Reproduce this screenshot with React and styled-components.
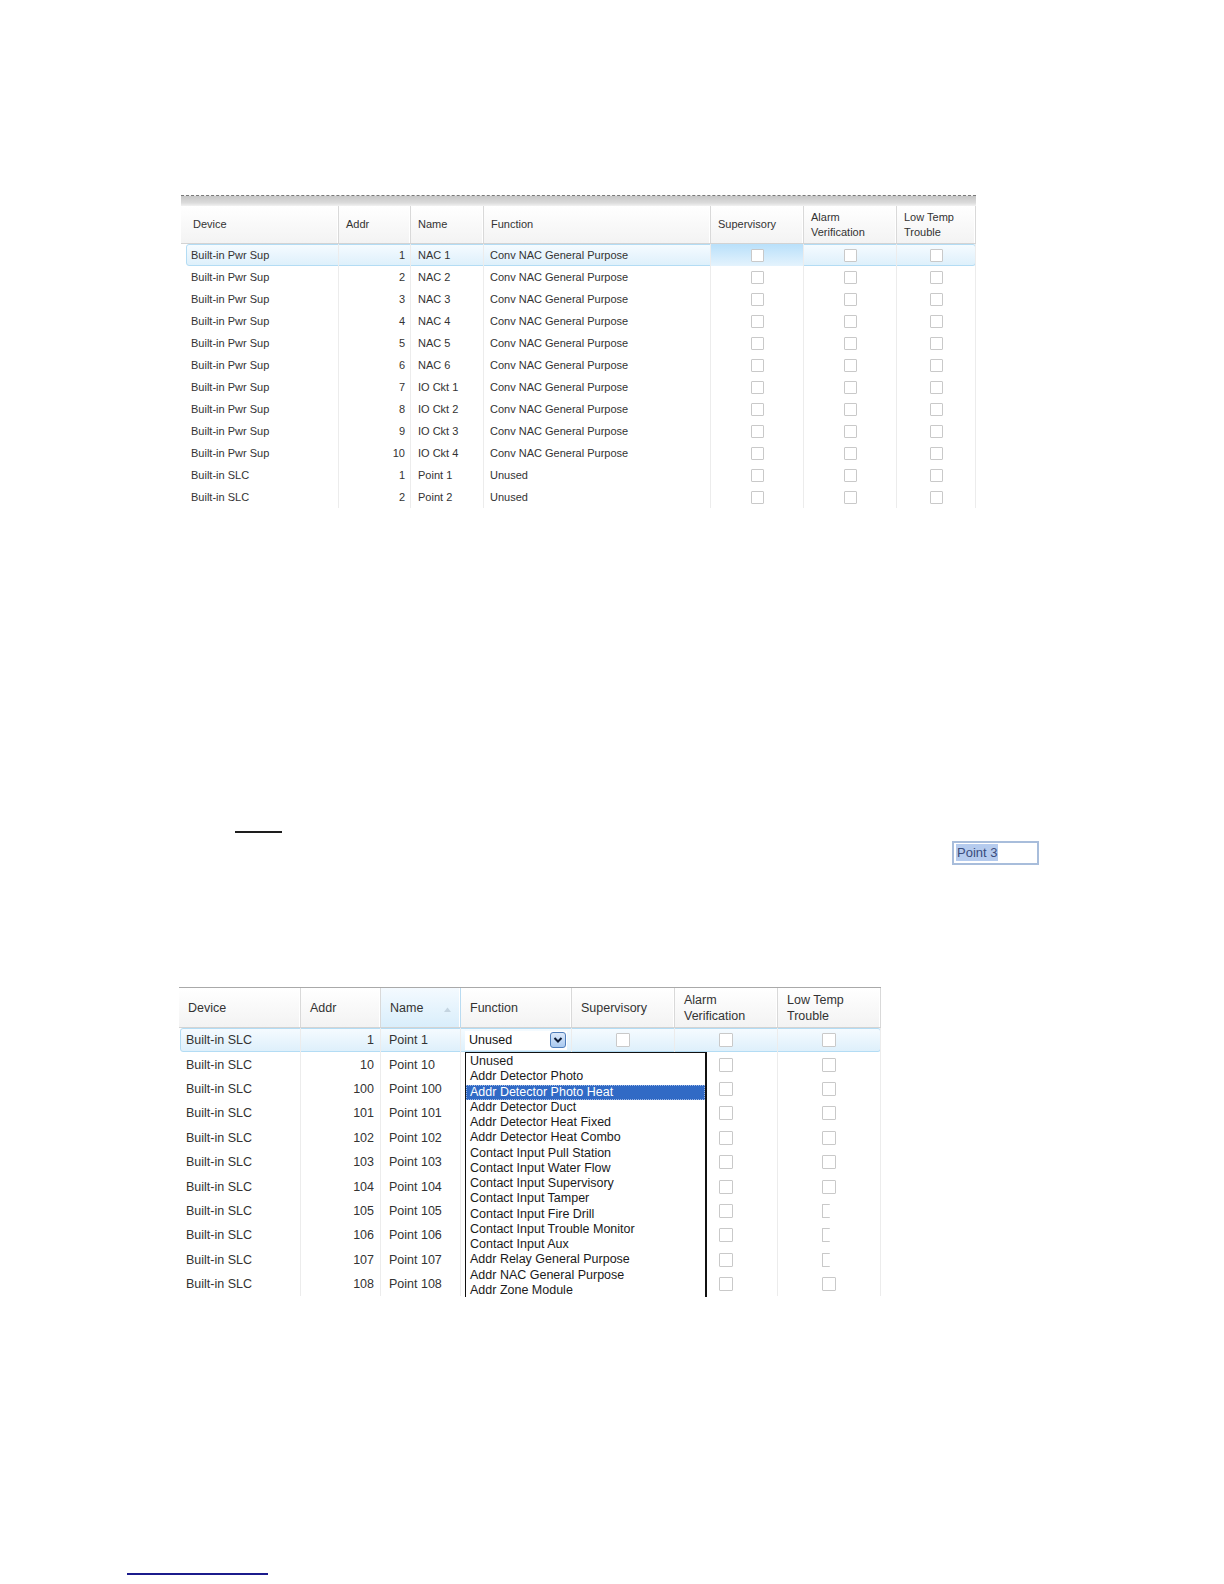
import React from 'react';
import styled, { createGlobalStyle, css } from 'styled-components';

const GlobalStyle = createGlobalStyle`
  html, body { margin: 0; padding: 0; background: #fff; overflow: hidden; }
  body { font-family: "Liberation Sans", Arial, sans-serif; color: #333; }
`;

const Page = styled.div`
  width: 1224px;
  height: 1584px;
  padding-top: 195px;
  box-sizing: border-box;
  display: flex;
  flex-direction: column;
  overflow: hidden;
`;

const Grid = styled.div`
  position: relative;
  margin-left: ${p => p.$left}px;
  width: ${p => p.$width}px;
  font-size: ${p => p.$size}px;
  color: #333;
  overflow: hidden;
  flex-shrink: 0;
  ${p => p.$topBorder && css`border-top: 1px solid #a9a9a9;`}
`;

const Toolbar = styled.div`
  height: 11px;
  box-sizing: border-box;
  border-top: 1px dashed #7a7a7a;
  background: linear-gradient(#c6c6c6, #dcdcdc 70%, #f2f2f2);
`;

const HeaderRow = styled.div`
  display: grid;
  grid-template-columns: ${p => p.$cols};
  height: ${p => p.$h}px;
  border-bottom: 1px solid #d3d3d3;
  background: linear-gradient(#ffffff, #f3f3f3);
`;

const HeaderCell = styled.div`
  display: flex;
  align-items: center;
  justify-content: space-between;
  padding: 0 6px 0 ${p => p.$pad}px;
  border-right: 1px solid #d9d9d9;
  box-shadow: inset -1px 0 0 #fff;
  line-height: ${p => p.$lh}px;
  white-space: pre-line;
  ${p => p.$sorted && css`
    background: linear-gradient(#f4faff, #d9eefb);
    border-right-color: #b9dbf1;
  `}
`;

const Row = styled.div`
  position: relative;
  display: grid;
  grid-template-columns: ${p => p.$cols};
  height: ${p => p.$h}px;
  ${p => p.$selected && css`
    &::before {
      content: '';
      position: absolute;
      left: ${p.$inset}px;
      right: 0;
      top: 0;
      bottom: 0;
      border: 1px solid #b3dcf4;
      border-radius: 3px;
      background: linear-gradient(#f5fbff, #def0fb);
    }
  `}
`;

const Cell = styled.div`
  position: relative;
  display: flex;
  align-items: center;
  justify-content: ${p => (p.$align === 'right' ? 'flex-end' : p.$align === 'center' ? 'center' : 'flex-start')};
  padding: 0 ${p => p.$padR}px 0 ${p => p.$padL}px;
  border-right: 1px solid #ececec;
  white-space: nowrap;
  overflow: hidden;
  ${p => p.$active && css`
    background: linear-gradient(#b9e0fa, #e4f3fd);
  `}
`;

const Check = styled.span`
  display: block;
  width: ${p => p.$s}px;
  height: ${p => p.$s}px;
  box-sizing: border-box;
  border: 1px solid #c9c9c9;
  border-radius: 1px;
  background: #fff;
  ${p => p.$cut && css`
    width: ${Math.round(p.$s * 0.55)}px;
    border-right: none;
    margin-right: ${Math.round(p.$s * 0.45)}px;
  `}
`;

const SortArrow = styled.svg`
  width: 7px;
  height: 5px;
  margin-right: 3px;
  margin-top: 4px;
`;

const Combo = styled.div`
  margin-left: 4px;
  width: 102px;
  height: 19px;
  box-sizing: border-box;
  padding-left: 4px;
  display: flex;
  align-items: center;
  justify-content: space-between;
  background: #fff;
  color: #111;
`;

const ComboButton = styled.span`
  width: 16px;
  height: 16px;
  margin-right: 1px;
  box-sizing: border-box;
  border: 1px solid #4e7dba;
  border-radius: 3px;
  background: linear-gradient(#dce9fa, #a9c9ef);
  display: flex;
  align-items: center;
  justify-content: center;
`;

const ListBox = styled.div`
  position: absolute;
  left: 286px;
  top: 64px;
  width: 242px;
  box-sizing: border-box;
  border: 1px solid #111;
  border-right-width: 2px;
  background: #fff;
  padding-top: 1px;
  color: #1a1a1a;
`;

const ListItem = styled.div`
  height: 15.25px;
  line-height: 15.25px;
  padding-left: 4px;
  white-space: nowrap;
  ${p => p.$selected && css`
    background: #316ac5;
    color: #fff;
    outline: 1px dotted #9fb9e6;
    outline-offset: -1px;
  `}
`;

const NoteRule = styled.div`
  margin: 323px 0 0 235px;
  width: 47px;
  height: 2px;
  flex-shrink: 0;
  background: #1e1e1e;
`;

const FieldRow = styled.div`
  display: flex;
  margin-top: 8px;
  padding-left: 952px;
  flex-shrink: 0;
`;

const TextField = styled.div`
  width: 87px;
  height: 24px;
  box-sizing: border-box;
  border: 2px solid #a8bddb;
  padding: 2px 2px;
  font-size: 13px;
  line-height: 16px;
  background: #fff;
`;

const SelectedText = styled.span`
  background: #b5cbee;
  color: #3a4c7c;
  padding: 1px 1px;
`;

const GridSlot = styled.div`
  margin-top: 122px;
  flex-shrink: 0;
`;

const FootRule = styled.div`
  margin: 276px 0 0 127px;
  width: 141px;
  height: 2px;
  flex-shrink: 0;
  background: #1b1b8c;
`;

const grid1Cols = [158, 72, 73, 227, 93, 93, 79].map(w => `${w}px`).join(' ');
const grid2Cols = [122, 80, 80, 111, 103, 103, 103].map(w => `${w}px`).join(' ');

const headers = ['Device', 'Addr', 'Name', 'Function', 'Supervisory', 'Alarm\nVerification', 'Low Temp\nTrouble'];

const pwr = [
  [1, 'NAC 1'], [2, 'NAC 2'], [3, 'NAC 3'], [4, 'NAC 4'], [5, 'NAC 5'],
  [6, 'NAC 6'], [7, 'IO Ckt 1'], [8, 'IO Ckt 2'], [9, 'IO Ckt 3'], [10, 'IO Ckt 4'],
];
const grid1Rows = [
  ...pwr.map(([a, n]) => ['Built-in Pwr Sup', a, n, 'Conv NAC General Purpose']),
  ['Built-in SLC', 1, 'Point 1', 'Unused'],
  ['Built-in SLC', 2, 'Point 2', 'Unused'],
];

const grid2Rows = [1, 10, 100, 101, 102, 103, 104, 105, 106, 107, 108].map(a => ['Built-in SLC', a, `Point ${a}`]);

const options = [
  'Unused',
  'Addr Detector Photo',
  'Addr Detector Photo Heat',
  'Addr Detector Duct',
  'Addr Detector Heat Fixed',
  'Addr Detector Heat Combo',
  'Contact Input Pull Station',
  'Contact Input Water Flow',
  'Contact Input Supervisory',
  'Contact Input Tamper',
  'Contact Input Fire Drill',
  'Contact Input Trouble Monitor',
  'Contact Input Aux',
  'Addr Relay General Purpose',
  'Addr NAC General Purpose',
  'Addr Zone Module',
];

const Chevron = () => (
  <svg width="10" height="8" viewBox="0 0 10 8">
    <path d="M1.5 2 L5 5.5 L8.5 2" fill="none" stroke="#0d1a33" strokeWidth="2" />
  </svg>
);

const PointsGrid = () => (
  <Grid $left={181} $width={795} $size={11}>
    <Toolbar />
    <HeaderRow $cols={grid1Cols} $h={37}>
      {headers.map((h, i) => (
        <HeaderCell key={h} $pad={i === 0 ? 12 : 7} $lh={14.5}>{h}</HeaderCell>
      ))}
    </HeaderRow>
    {grid1Rows.map((r, i) => (
      <Row key={i} $cols={grid1Cols} $h={22} $selected={i === 0} $inset={5}>
        <Cell $padL={10} $padR={4}>{r[0]}</Cell>
        <Cell $align="right" $padL={4} $padR={5}>{r[1]}</Cell>
        <Cell $padL={7} $padR={4}>{r[2]}</Cell>
        <Cell $padL={6} $padR={4}>{r[3]}</Cell>
        {[0, 1, 2].map(c => (
          <Cell key={c} $align="center" $padL={0} $padR={0} $active={i === 0 && c === 0}>
            <Check $s={13} />
          </Cell>
        ))}
      </Row>
    ))}
  </Grid>
);

const EditGrid = () => (
  <Grid $left={179} $width={702} $size={12.5} $topBorder style={{ height: 309 }}>
    <HeaderRow $cols={grid2Cols} $h={39}>
      {headers.map((h, i) => (
        <HeaderCell key={h} $pad={9} $lh={16} $sorted={i === 2}>
          {h}
          {i === 2 && (
            <SortArrow viewBox="0 0 7 5">
              <path d="M0 5 L3.5 0.5 L7 5 Z" fill="#c4d4e0" />
            </SortArrow>
          )}
        </HeaderCell>
      ))}
    </HeaderRow>
    {grid2Rows.map((r, i) => (
      <Row key={i} $cols={grid2Cols} $h={24.4} $selected={i === 0} $inset={1}>
        <Cell $padL={7} $padR={4}>{r[0]}</Cell>
        <Cell $align="right" $padL={4} $padR={6}>{r[1]}</Cell>
        <Cell $padL={8} $padR={4}>{r[2]}</Cell>
        <Cell $padL={0} $padR={0}>
          {i === 0 && (
            <Combo>
              Unused
              <ComboButton><Chevron /></ComboButton>
            </Combo>
          )}
        </Cell>
        {[0, 1, 2].map(c => (
          <Cell key={c} $align="center" $padL={0} $padR={0}>
            <Check $s={14} $cut={c === 2 && i >= 7 && i <= 9} />
          </Cell>
        ))}
      </Row>
    ))}
    <ListBox>
      {options.map((o, i) => (
        <ListItem key={o} $selected={i === 2}>{o}</ListItem>
      ))}
    </ListBox>
  </Grid>
);

export default function App() {
  return (
    <>
      <GlobalStyle />
      <Page>
        <PointsGrid />
        <NoteRule />
        <FieldRow>
          <TextField><SelectedText>Point 3</SelectedText></TextField>
        </FieldRow>
        <GridSlot>
          <EditGrid />
        </GridSlot>
        <FootRule />
      </Page>
    </>
  );
}
